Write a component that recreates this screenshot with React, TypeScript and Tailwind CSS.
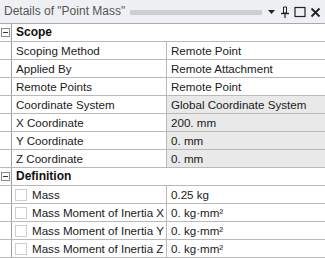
import React from "react";

type Row = { label: string; value: string; gray?: boolean; check?: boolean };

const scope: Row[] = [
  { label: "Scoping Method", value: "Remote Point" },
  { label: "Applied By", value: "Remote Attachment" },
  { label: "Remote Points", value: "Remote Point" },
  { label: "Coordinate System", value: "Global Coordinate System", gray: true },
  { label: "X Coordinate", value: "200. mm", gray: true },
  { label: "Y Coordinate", value: "0. mm", gray: true },
  { label: "Z Coordinate", value: "0. mm", gray: true },
];

const definition: Row[] = [
  { label: "Mass", value: "0.25 kg", check: true },
  { label: "Mass Moment of Inertia X", value: "0. kg·mm²", check: true },
  { label: "Mass Moment of Inertia Y", value: "0. kg·mm²", check: true },
  { label: "Mass Moment of Inertia Z", value: "0. kg·mm²", check: true },
];

function Category({ title }: { title: string }) {
  return (
    <div className="flex h-[18px] border-b border-[#b9b9b9]">
      <div className="w-[12px] shrink-0 flex items-center justify-center border-r border-[#a0a0a0] bg-white">
        <div className="w-[9px] h-[9px] border border-[#8a8a8a] flex items-center justify-center">
          <div className="w-[5px] h-px bg-[#333]" />
        </div>
      </div>
      <div className="flex-1 pl-[4px] font-bold text-[12px] text-[#111] leading-[17px]">{title}</div>
    </div>
  );
}

function Item({ row }: { row: Row }) {
  return (
    <div className="flex h-[18px] border-b border-[#b9b9b9]">
      <div className="w-[12px] shrink-0 border-r border-[#a0a0a0] bg-white" />
      <div
        className={`w-[155px] shrink-0 flex items-center border-r border-[#b9b9b9] overflow-hidden ${row.check ? "pl-[3px]" : "pl-[4px]"}`}
      >
        {row.check && (
          <div className="w-[12px] h-[12px] shrink-0 border border-[#cdcdcd] bg-white mr-[5px]" />
        )}
        <span className="leading-[17px] whitespace-nowrap">{row.label}</span>
      </div>
      <div
        className={`flex-1 pl-[4px] leading-[17px] whitespace-nowrap ${row.gray ? "bg-[#e9e9e9]" : "bg-white"}`}
      >
        {row.value}
      </div>
    </div>
  );
}

export default function App() {
  return (
    <div
      className="w-[325px] h-[258px] overflow-hidden bg-white text-[11.6px] text-[#1a1a1a]"
      style={{ fontFamily: '"Liberation Sans", Arial, sans-serif' }}
    >
      <div className="h-[24px] flex items-end bg-[#eef0f3] border-b border-[#a9a9a9] pb-[3px] pl-[4px] pr-[4px]">
        <span className="text-[#555] text-[12px] whitespace-nowrap leading-[17px]">Details of "Point Mass"</span>
        <div className="flex-1 h-[5px] ml-[5px] mr-[5px] mb-[5px] bg-[radial-gradient(#a8a8a8_0.6px,transparent_0.8px)] bg-[length:2px_2px]" />
        <div className="flex items-center gap-[4px] mb-[2px]">
          <svg width="9" height="10" viewBox="0 0 9 10">
            <path d="M1 3h7L4.5 7z" fill="#222" />
          </svg>
          <svg width="10" height="12" viewBox="0 0 10 12">
            <path d="M3.5 1h3v6h-3z" fill="none" stroke="#222" strokeWidth="1" />
            <path d="M1 7.5h8" stroke="#222" strokeWidth="1.4" />
            <path d="M5 8v4" stroke="#222" strokeWidth="1.2" />
          </svg>
          <svg width="12" height="12" viewBox="0 0 12 12">
            <rect x="1" y="1.5" width="10" height="9" fill="none" stroke="#222" strokeWidth="1.2" />
          </svg>
          <svg width="11" height="11" viewBox="0 0 11 11">
            <path d="M1.5 1.5l8 8M9.5 1.5l-8 8" stroke="#222" strokeWidth="1.8" />
          </svg>
        </div>
      </div>
      <Category title="Scope" />
      {scope.map((r) => (
        <Item key={r.label} row={r} />
      ))}
      <Category title="Definition" />
      {definition.map((r) => (
        <Item key={r.label} row={r} />
      ))}
    </div>
  );
}
